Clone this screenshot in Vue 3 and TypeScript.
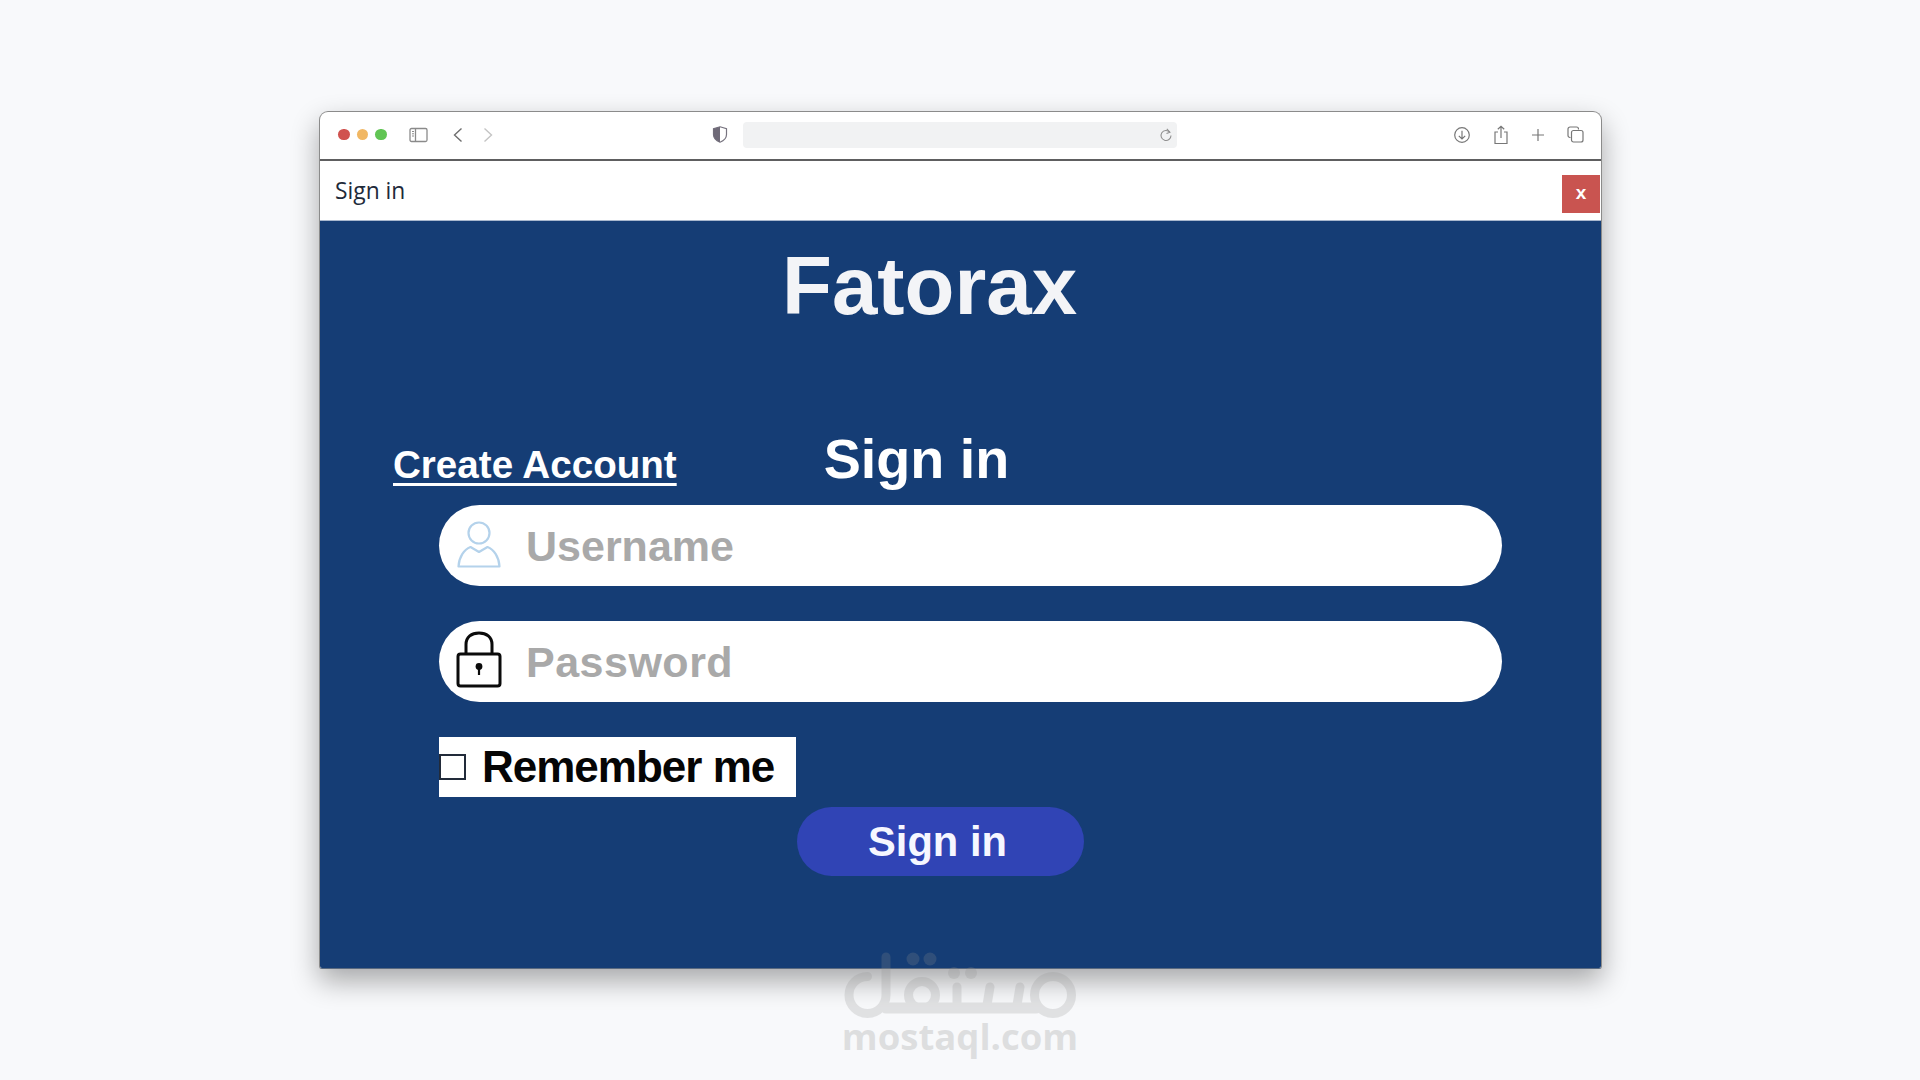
<script setup lang="ts">
import { ref } from 'vue'

const username = ref('')
const password = ref('')
const remember = ref(false)
</script>

<template>
  <div class="page">
    <div class="window">
      <div class="toolbar">
        <div class="lights">
          <span class="light red"></span>
          <span class="light orange"></span>
          <span class="light green"></span>
        </div>
        <svg class="ic sidebar-ic" width="20" height="16" viewBox="0 0 20 16" fill="none" stroke="#8a8a8a" stroke-width="1.3">
          <rect x="1" y="1.5" width="17" height="13" rx="1.5" />
          <path d="M6.5 1.5v13" />
          <path d="M3 4.5h2M3 6.8h2M3 9h2" stroke-width="1" />
        </svg>
        <svg class="ic back-ic" width="12" height="16" viewBox="0 0 12 16" fill="none" stroke="#6e6e6e" stroke-width="1.4">
          <path d="M9.5 1.5 2.5 8l7 6.5" />
        </svg>
        <svg class="ic fwd-ic" width="12" height="16" viewBox="0 0 12 16" fill="none" stroke="#c4c4c4" stroke-width="1.4">
          <path d="M2.5 1.5 9.5 8l-7 6.5" />
        </svg>
        <svg class="ic shield-ic" width="16" height="17" viewBox="0 0 16 17">
          <path d="M8 .8 14.5 2.8V8.5C14.5 12.5 11 15 8 16.2 5 15 1.5 12.5 1.5 8.5V2.8Z" fill="#fff" stroke="#77737f" stroke-width="1.2" />
          <path d="M8 .8 1.5 2.8V8.5C1.5 12.5 5 15 8 16.2Z" fill="#6f6a78" />
        </svg>
        <div class="address">
          <svg width="14" height="14" viewBox="0 0 14 14" fill="none" stroke="#8f8f8f" stroke-width="1.1">
            <path d="M10.8 4.2A5 5 0 1 0 12 7.5" />
            <path d="M7.8 .8 10.9 4.2 7.5 5.4" />
          </svg>
        </div>
        <div class="tools">
          <svg width="18" height="18" viewBox="0 0 18 18" fill="none" stroke="#777" stroke-width="1.2">
            <circle cx="9" cy="9" r="7.3" />
            <path d="M9 4.8v8M5.8 9.8 9 13l3.2-3.2" />
          </svg>
          <svg width="16" height="20" viewBox="0 0 16 20" fill="none" stroke="#777" stroke-width="1.2">
            <path d="M5 7H2v11.5h12V7h-3" />
            <path d="M8 13V1.2M4.8 4.200 8 1.200l3.200 3" />
          </svg>
          <svg width="14" height="14" viewBox="0 0 14 14" fill="none" stroke="#777" stroke-width="1.2">
            <path d="M7 1v12M1 7h12" />
          </svg>
          <svg width="17" height="17" viewBox="0 0 17 17" fill="none" stroke="#777" stroke-width="1.2">
            <path d="M3.5 11.5H3A2 2 0 0 1 1 9.5V3a2 2 0 0 1 2-2h6.5a2 2 0 0 1 2 2v.5" />
            <rect x="4.5" y="4.5" width="11.5" height="11.5" rx="2" />
          </svg>
        </div>
      </div>

      <div class="titlebar">
        <span class="title">Sign in</span>
        <button class="close" type="button">x</button>
      </div>

      <div class="content">
        <h1 class="brand">Fatorax</h1>

        <div class="heading-row">
          <a class="create" href="#">Create Account</a>
          <h2 class="heading">Sign in</h2>
        </div>

        <label class="field">
          <svg class="field-ic user-ic" width="50" height="50" viewBox="0 0 50 50" fill="none" stroke="#b4d2eb" stroke-width="2.2">
            <circle cx="24" cy="13" r="10.5" />
            <path d="M15.5 27C9 29.5 4 37 3.5 46.5h41C44 37 39 29.5 32.5 27L24 32Z" stroke-linejoin="round" />
          </svg>
          <input v-model="username" class="input" type="text" placeholder="Username" />
        </label>

        <label class="field">
          <svg class="field-ic lock-ic" width="50" height="58" viewBox="0 0 50 58" fill="none" stroke="#0b0b0b" stroke-width="3">
            <path d="M11 24V14.5C11 7 16.5 3 24 3s13 4 13 11.5V24" />
            <rect x="3" y="24" width="42" height="32" rx="2.5" />
            <circle cx="24" cy="36.5" r="3.4" fill="#0b0b0b" stroke="none" />
            <path d="M24 37v8" stroke-width="2.2" />
          </svg>
          <input v-model="password" class="input pass" type="password" placeholder="Password" />
        </label>

        <label class="remember">
          <input v-model="remember" class="check" type="checkbox" />
          <span>Remember me</span>
        </label>

        <button class="submit" type="button">Sign in</button>
      </div>
    </div>

    <div class="watermark">
      <svg width="232" height="72" viewBox="0 0 232 72" fill="none" stroke="#8f8f8f" stroke-width="9" stroke-linecap="round">
        <path d="M42 6v38a18.5 18.5 0 1 1-18.5-18.5" />
        <circle cx="78" cy="44" r="13.5" />
        <path d="M42 57h150" stroke-width="11" />
        <circle cx="209" cy="44" r="18.5" />
        <path d="M113 36v18M146 36l-3 18M176 36l-3 18" />
        <g fill="#8f8f8f" stroke="none">
          <circle cx="69" cy="8" r="6.5" />
          <circle cx="86" cy="8" r="6.5" />
          <circle cx="110" cy="22" r="6" />
          <circle cx="127" cy="22" r="6" />
        </g>
      </svg>
      <span class="wm-text">mostaql.com</span>
    </div>
  </div>
</template>

<style>
html,
body {
  margin: 0;
  background: #f8f9fb;
}
</style>

<style scoped>
* {
  box-sizing: border-box;
}

.page {
  position: relative;
  width: 1920px;
  height: 1080px;
  overflow: hidden;
  padding-top: 111px;
  background: #f8f9fb;
  font-family: "Liberation Sans", Arial, sans-serif;
}

.window {
  width: 1283px;
  height: 858px;
  margin-left: 319px;
  border: 1px solid #8b8b8b;
  border-bottom-color: #5a6a80;
  border-radius: 9px 9px 3px 3px;
  background: #fff;
  overflow: hidden;
  box-shadow: 0 12px 28px rgba(0, 0, 0, 0.33);
  display: flex;
  flex-direction: column;
}

.toolbar {
  height: 49px;
  flex: none;
  display: flex;
  align-items: center;
  padding-bottom: 2px;
  border-bottom: 2px solid #5e5e60;
}

.lights {
  display: flex;
  gap: 7px;
  margin-left: 18px;
}

.light {
  width: 11.5px;
  height: 11.5px;
  border-radius: 50%;
}

.red {
  background: #d0524f;
}

.orange {
  background: #f1b763;
}

.green {
  background: #61c554;
}

.ic {
  flex: none;
}

.sidebar-ic {
  margin-left: 22px;
}

.back-ic {
  margin-left: 23px;
}

.fwd-ic {
  margin-left: 18px;
}

.shield-ic {
  margin-left: 218px;
}

.address {
  width: 434px;
  height: 26px;
  margin-left: 15px;
  border-radius: 4px;
  background: #f1f2f3;
  display: flex;
  align-items: center;
  justify-content: flex-end;
  padding-right: 4px;
}

.tools {
  margin-left: auto;
  margin-right: 17px;
  display: flex;
  align-items: center;
  gap: 22px;
}

.titlebar {
  height: 60px;
  flex: none;
  display: flex;
  align-items: flex-start;
  justify-content: space-between;
  padding: 15px 1px 0 15px;
  border-bottom: 1px solid #a9b8ce;
}

.title {
  font-family: "Open Sans", sans-serif;
  font-size: 22.8px;
  line-height: 30px;
  color: #1e2a3a;
}

.close {
  width: 38px;
  height: 38px;
  margin-top: -1px;
  border: 0;
  padding: 0 0 2px;
  background: #c95450;
  color: #fff;
  font-family: "Liberation Sans", Arial, sans-serif;
  font-size: 19px;
  font-weight: 700;
}

.content {
  flex: 1;
  background: #153d75;
  padding-top: 19px;
  display: flex;
  flex-direction: column;
  align-items: flex-start;
}

.brand {
  margin: 0 0 0 462px;
  font-size: 81.7px;
  line-height: 92px;
  font-weight: 700;
  color: #f3f4f7;
}

.heading-row {
  margin: 94px 0 13px 73px;
  display: flex;
  align-items: baseline;
  gap: 147px;
  height: 66px;
}

.create {
  color: #fff;
  font-size: 38.6px;
  font-weight: 700;
  text-decoration: underline;
  text-decoration-thickness: 3px;
  text-underline-offset: 5px;
  position: relative;
}

.heading {
  margin: 0;
  color: #fff;
  font-size: 55.7px;
  line-height: 66px;
  font-weight: 700;
}

.field {
  width: 1063px;
  height: 81px;
  margin: 0 0 35px 119px;
  flex: none;
  border-radius: 41px;
  background: #fff;
  display: flex;
  align-items: center;
  padding-left: 16px;
}

.field-ic {
  flex: none;
}

.user-ic {
  margin-top: -2px;
}

.lock-ic {
  margin-top: -5px;
}

.input {
  flex: 1;
  min-width: 0;
  height: 100%;
  margin-left: 19px;
  padding-top: 2px;
  border: 0;
  outline: 0;
  background: transparent;
  font-family: "Liberation Sans", Arial, sans-serif;
  font-size: 43px;
  font-weight: 700;
  color: #333;
  border-radius: 0 41px 41px 0;
}

.pass {
  letter-spacing: 0.5px;
}

.input::placeholder {
  color: #a9a9a9;
  opacity: 1;
}

.remember {
  width: 357px;
  height: 60px;
  margin: 0 0 0 119px;
  flex: none;
  background: #fff;
  color: #050505;
  display: flex;
  align-items: center;
  font-size: 44px;
  font-weight: 700;
  letter-spacing: -1px;
}

.check {
  appearance: none;
  width: 27px;
  height: 26px;
  margin: 0 16px 0 0;
  border: 2px solid #222b3a;
  background: #fff;
  flex: none;
}

.submit {
  width: 287px;
  height: 69px;
  margin: 10px 0 0 477px;
  flex: none;
  border: 0;
  border-radius: 35px;
  background: #3044b5;
  color: #f6f7ff;
  font-family: "Liberation Sans", Arial, sans-serif;
  font-size: 41.7px;
  font-weight: 700;
  padding: 0 6px 0 0;
}

.watermark {
  position: absolute;
  left: 844px;
  top: 951px;
  width: 232px;
  display: flex;
  flex-direction: column;
  align-items: center;
  opacity: 0.22;
  pointer-events: none;
}

.wm-text {
  margin-top: -7px;
  font-family: "Open Sans", sans-serif;
  font-size: 36.500px;
  line-height: 40px;
  font-weight: 700;
  color: #808080;
  white-space: nowrap;
}
</style>
